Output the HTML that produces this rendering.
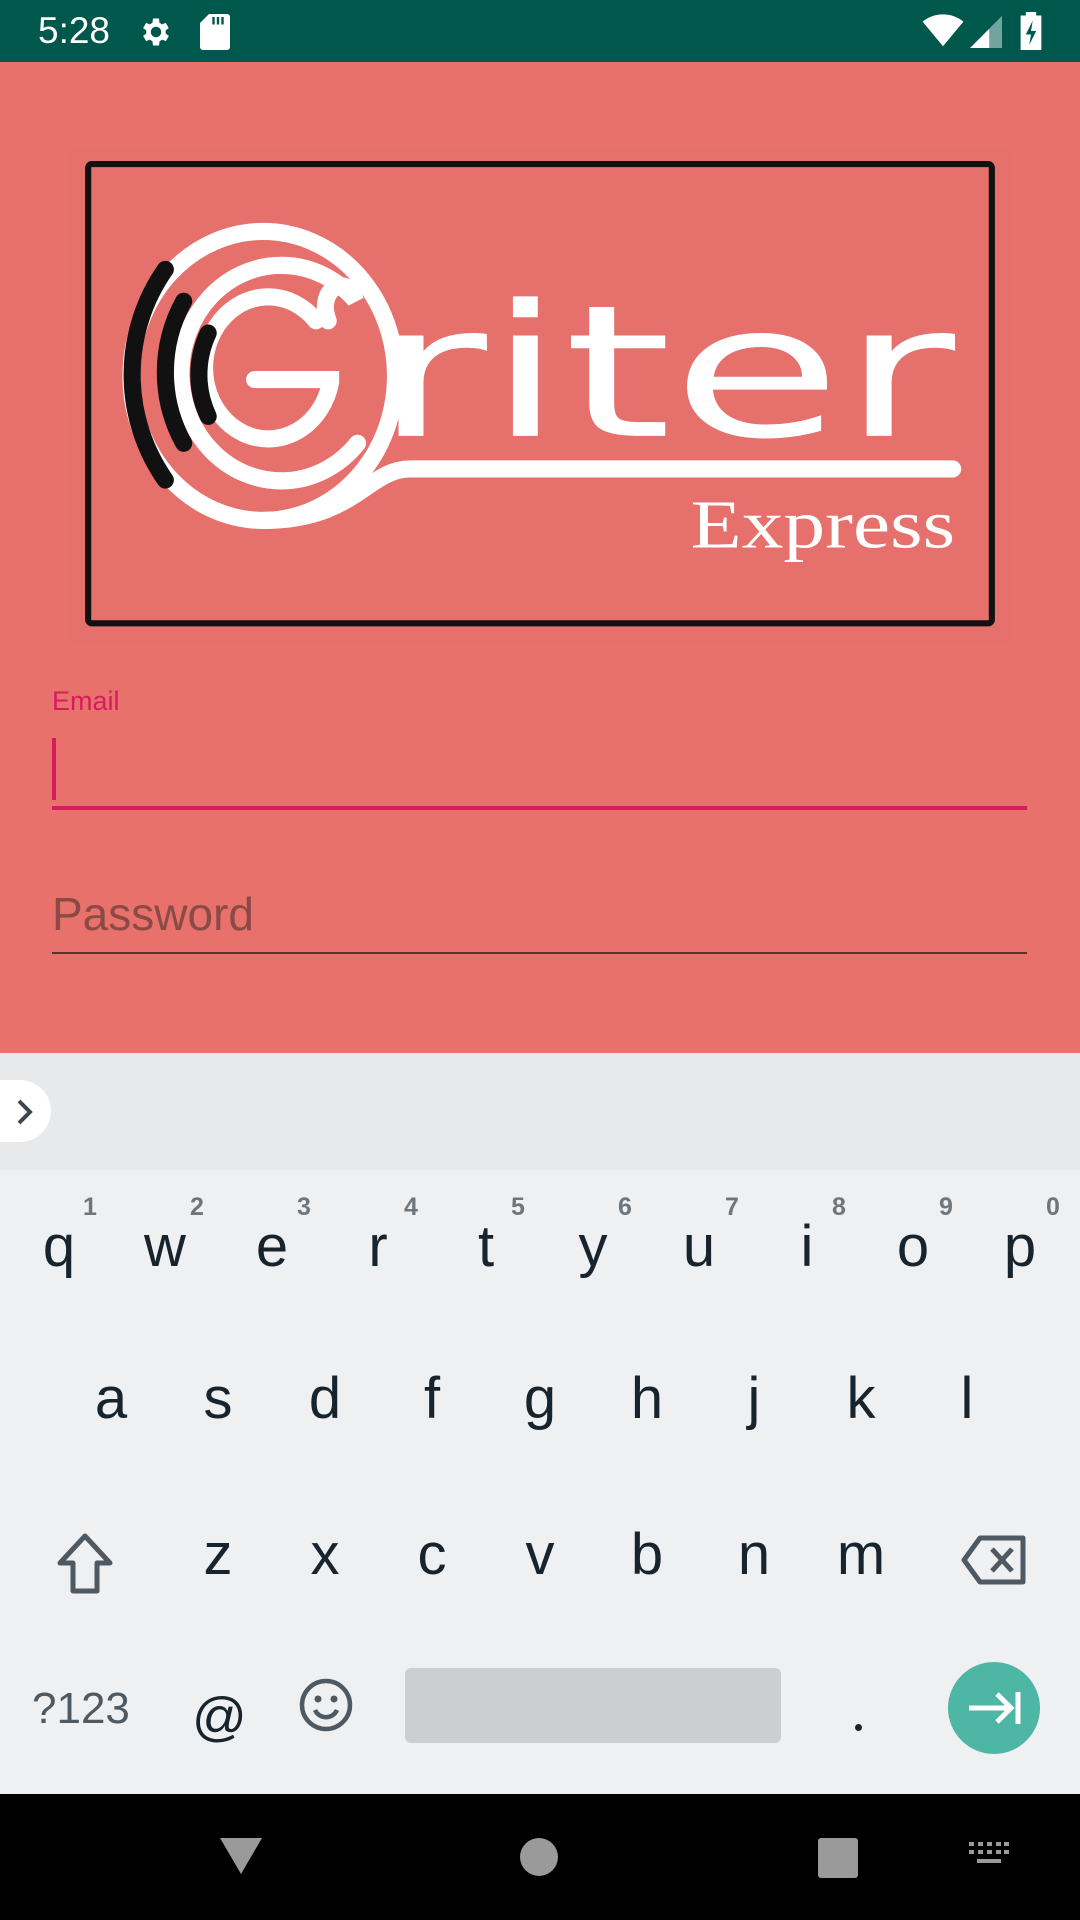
<!DOCTYPE html>
<html><head><meta charset="utf-8"><style>
*{margin:0;padding:0;box-sizing:border-box}
body{width:1080px;height:1920px;position:relative;overflow:hidden;background:#e8716b;font-family:"Liberation Sans",sans-serif}
.a{position:absolute}
.k{position:absolute;font-size:58px;color:#17232d;width:100px;text-align:center;line-height:1}
.d{position:absolute;font-size:25px;color:#6e767c;line-height:1;font-weight:bold}
</style></head><body>
<div class="a" style="left:0;top:0;width:1080px;height:62px;background:#00584c"></div>
<div class="a" style="left:38px;top:10px;font-size:37px;color:#fff">5:28</div>
<svg class="a" style="left:138px;top:14px" width="36" height="36" viewBox="0 0 24 24"><path fill="#fff" d="M19.4 13a7.6 7.6 0 000-2l2.1-1.6-2-3.5-2.5 1a7.4 7.4 0 00-1.7-1L15 3h-4l-.4 2.9a7.4 7.4 0 00-1.7 1l-2.5-1-2 3.5L6.6 11a7.6 7.6 0 000 2l-2.2 1.6 2 3.5 2.5-1a7.4 7.4 0 001.7 1L11 21h4l.4-2.9a7.4 7.4 0 001.7-1l2.5 1 2-3.5zM13 15.5a3.5 3.5 0 110-7 3.5 3.5 0 010 7z" transform="translate(-1 0)"/></svg>
<svg class="a" style="left:200px;top:14px" width="30" height="36" viewBox="0 0 20 24"><path fill="#fff" d="M6 0h12a2 2 0 012 2v20a2 2 0 01-2 2H2a2 2 0 01-2-2V6z"/><path stroke="#00584c" stroke-width="1.6" d="M9 2v5M12 2v5M15 2v5"/></svg>
<svg class="a" style="left:922px;top:14px" width="42" height="34" viewBox="0 0 24 20"><path fill="#fff" d="M12 19L0 4.5A19 19 0 0124 4.5z"/></svg>
<svg class="a" style="left:968px;top:16px" width="36" height="32" viewBox="0 0 20 20"><path fill="#fff" d="M20 0v20H0z"/><path fill="#00584c" opacity=".55" d="M20 0v20h-8V8z"/></svg>
<svg class="a" style="left:1020px;top:12px" width="22" height="38" viewBox="0 0 12 22"><path fill="#fff" d="M3 0h6v2h3v20H0V2h3z"/><path fill="#00584c" d="M7 5L3 13h3l-1 6 4-8H6z"/></svg>

<div class="a" style="left:67px;top:147px;width:943px;height:496px;background:#e6706c"></div>
<svg class="a" style="left:0;top:0" width="1080" height="1920" viewBox="0 0 882 1568">
<rect x="72" y="134" width="738" height="375" rx="3" fill="none" stroke="#111" stroke-width="5"/>
<g fill="none" stroke="#fff" stroke-width="14" stroke-linecap="round">
<ellipse cx="215" cy="307" rx="108" ry="118"/>
<path d="M778 383H335C300 383 290 425 215 425"/>
<path d="M292 362A82 88 0 1 1 290 245C284 222 258 236 268 262"/>
<path d="M258 262A52 58 0 1 0 270 312V310H208"/>
</g>
<g fill="none" stroke="#111" stroke-width="14" stroke-linecap="round">
<path d="M135 220A150 150 0 0 0 135 392"/>
<path d="M150 246A120 120 0 0 0 150 362"/>
<path d="M170 272A80 80 0 0 0 170 340"/>
</g>
<text x="305" y="356" font-family="DejaVu Sans,sans-serif" font-size="150" fill="#fff" textLength="475" lengthAdjust="spacingAndGlyphs">riter</text>
<text x="564" y="447" font-family="Liberation Serif,serif" font-size="56" fill="#fff" textLength="216" lengthAdjust="spacingAndGlyphs">Express</text>
</svg>

<div class="a" style="left:52px;top:686px;font-size:27px;color:#d81b60">Email</div>
<div class="a" style="left:52px;top:738px;width:4px;height:62px;background:#d81b60"></div>
<div class="a" style="left:52px;top:806px;width:975px;height:4px;background:#d81b60"></div>
<div class="a" style="left:52px;top:887px;font-size:46px;color:#8a4a45">Password</div>
<div class="a" style="left:52px;top:952px;width:975px;height:2px;background:#5a3328"></div>

<div class="a" style="left:0;top:1053px;width:1080px;height:117px;background:#e7e9ea"></div>
<div class="a" style="left:0;top:1170px;width:1080px;height:624px;background:#eef0f1"></div>
<div class="a" style="left:-30px;top:1080px;width:81px;height:62px;border-radius:31px;background:#fff"></div>
<svg class="a" style="left:14px;top:1098px" width="22" height="28" viewBox="0 0 22 28"><path d="M5 3l11 11L5 25" fill="none" stroke="#3c4650" stroke-width="4"/></svg>

<div class="k" style="left:9px;top:1218px">q</div><div class="d" style="left:83px;top:1195px">1</div>
<div class="k" style="left:115px;top:1218px">w</div><div class="d" style="left:190px;top:1195px">2</div>
<div class="k" style="left:222px;top:1218px">e</div><div class="d" style="left:297px;top:1195px">3</div>
<div class="k" style="left:328px;top:1218px">r</div><div class="d" style="left:404px;top:1195px">4</div>
<div class="k" style="left:436px;top:1218px">t</div><div class="d" style="left:511px;top:1195px">5</div>
<div class="k" style="left:543px;top:1218px">y</div><div class="d" style="left:618px;top:1195px">6</div>
<div class="k" style="left:649px;top:1218px">u</div><div class="d" style="left:725px;top:1195px">7</div>
<div class="k" style="left:757px;top:1218px">i</div><div class="d" style="left:832px;top:1195px">8</div>
<div class="k" style="left:863px;top:1218px">o</div><div class="d" style="left:939px;top:1195px">9</div>
<div class="k" style="left:970px;top:1218px">p</div><div class="d" style="left:1046px;top:1195px">0</div>

<div class="k" style="left:61px;top:1370px">a</div>
<div class="k" style="left:168px;top:1370px">s</div>
<div class="k" style="left:275px;top:1370px">d</div>
<div class="k" style="left:382px;top:1370px">f</div>
<div class="k" style="left:490px;top:1370px">g</div>
<div class="k" style="left:597px;top:1370px">h</div>
<div class="k" style="left:704px;top:1370px">j</div>
<div class="k" style="left:811px;top:1370px">k</div>
<div class="k" style="left:917px;top:1370px">l</div>

<svg class="a" style="left:55px;top:1532px" width="60" height="64" viewBox="0 0 60 64"><path d="M30 4L5 31h13v28h24V31h13z" fill="none" stroke="#4e5962" stroke-width="5" stroke-linejoin="round"/></svg>
<div class="k" style="left:168px;top:1526px">z</div>
<div class="k" style="left:275px;top:1526px">x</div>
<div class="k" style="left:382px;top:1526px">c</div>
<div class="k" style="left:490px;top:1526px">v</div>
<div class="k" style="left:597px;top:1526px">b</div>
<div class="k" style="left:704px;top:1526px">n</div>
<div class="k" style="left:811px;top:1526px">m</div>
<svg class="a" style="left:960px;top:1534px" width="68" height="52" viewBox="0 0 68 52"><path d="M20 4H63V48H20L4 26z" fill="none" stroke="#4e5962" stroke-width="5" stroke-linejoin="round"/><path d="M32 15l20 22M52 15L32 37" stroke="#4e5962" stroke-width="5"/></svg>

<div class="a" style="left:32px;top:1684px;font-size:44px;color:#4e5962">?123</div>
<div class="a" style="left:192px;top:1686px;font-size:54px;color:#17232d">@</div>
<svg class="a" style="left:298px;top:1677px" width="56" height="56" viewBox="0 0 56 56"><circle cx="28" cy="28" r="24" fill="none" stroke="#4e5962" stroke-width="4.5"/><circle cx="20" cy="22" r="3.5" fill="#4e5962"/><circle cx="36" cy="22" r="3.5" fill="#4e5962"/><path d="M17 33a12 12 0 0022 0" fill="none" stroke="#4e5962" stroke-width="4.5"/></svg>
<div class="a" style="left:405px;top:1668px;width:376px;height:75px;border-radius:6px;background:#cccfd2"></div>
<div class="a" style="left:855px;top:1724px;width:7px;height:7px;border-radius:4px;background:#17232d"></div>
<div class="a" style="left:948px;top:1662px;width:92px;height:92px;border-radius:46px;background:#4db6a4"></div>
<svg class="a" style="left:966px;top:1688px" width="58" height="40" viewBox="0 0 58 40"><path d="M3 20h42M31 6l14 14-14 14M52 4v32" fill="none" stroke="#fff" stroke-width="5"/></svg>

<div class="a" style="left:0;top:1794px;width:1080px;height:126px;background:#000"></div>
<svg class="a" style="left:218px;top:1834px" width="46" height="42" viewBox="0 0 46 42"><path d="M2 4h42L23 40z" fill="#9a9a9a"/></svg>
<div class="a" style="left:520px;top:1838px;width:38px;height:38px;border-radius:19px;background:#9a9a9a"></div>
<div class="a" style="left:818px;top:1838px;width:40px;height:40px;border-radius:3px;background:#9a9a9a"></div>
<svg class="a" style="left:968px;top:1840px" width="42" height="32" viewBox="0 0 42 32"><g fill="#9a9a9a"><rect x="1" y="2" width="5" height="4"/><rect x="10" y="2" width="5" height="4"/><rect x="19" y="2" width="5" height="4"/><rect x="28" y="2" width="5" height="4"/><rect x="36" y="2" width="5" height="4"/><rect x="1" y="10" width="5" height="4"/><rect x="10" y="10" width="5" height="4"/><rect x="19" y="10" width="5" height="4"/><rect x="28" y="10" width="5" height="4"/><rect x="36" y="10" width="5" height="4"/><rect x="9" y="19" width="24" height="4"/></g></svg>
</body></html>
